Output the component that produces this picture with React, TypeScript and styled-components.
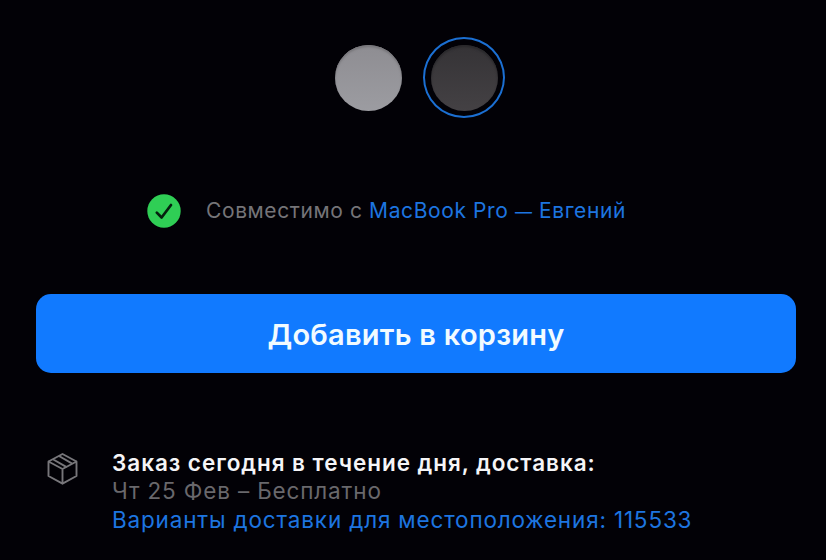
import React from 'react';
import styled, { createGlobalStyle } from 'styled-components';

const GlobalStyle = createGlobalStyle`
  * { box-sizing: border-box; }
  body { margin: 0; background: #020106; }
`;

const Page = styled.main`
  display: flex;
  flex-direction: column;
  width: 826px;
  height: 560px;
  padding: 37px 30px 0 36px;
  overflow: hidden;
  background: #020106;
  color: #f5f5f7;
  font-family: Inter, 'Liberation Sans', sans-serif;
`;

const Swatches = styled.div`
  display: flex;
  justify-content: center;
  gap: 14px;
  height: 81px;
`;

const Swatch = styled.button<{ $selected?: boolean }>`
  display: grid;
  place-items: center;
  width: 82px;
  height: 81px;
  padding: 0;
  border: 2px solid ${(p) => (p.$selected ? '#1b6fd2' : 'transparent')};
  border-radius: 50%;
  background: none;
`;

const Finish = styled.span<{ $from: string; $to: string; $edge: string }>`
  width: 67px;
  height: 66px;
  border-radius: 50%;
  background: linear-gradient(${(p) => p.$from}, ${(p) => p.$to});
  box-shadow: inset 0 2px 2px ${(p) => p.$edge};
`;

const Compatibility = styled.div`
  display: flex;
  align-items: center;
  height: 34px;
  margin: 76px 0 0 111px;
  gap: 25px;
`;

const CompatText = styled.p`
  margin: 0;
  color: #757478;
  font-size: 21px;
  line-height: 28px;
  letter-spacing: 0.6px;
  white-space: nowrap;
`;

const Link = styled.a`
  color: #1d75e0;
`;

const Dash = styled.span`
  font-size: 17px;
`;

const AddButton = styled.button`
  width: 760px;
  height: 79px;
  margin-top: 66px;
  padding: 2px 0 0;
  border: 0;
  border-radius: 15px;
  background: #117aff;
  color: #f2fbff;
  font: 600 29px/36px Inter, 'Liberation Sans', sans-serif;
  letter-spacing: 0.25px;
`;

const Delivery = styled.section`
  display: flex;
  align-items: flex-start;
  margin: 75.5px 0 0 11px;
`;

const BoxIcon = styled.svg`
  flex: none;
  width: 31px;
  height: 34px;
  margin: 3px 34px 0 0;
`;

const DeliveryText = styled.div`
  display: flex;
  flex-direction: column;
`;

const Line = styled.div<{ $color: string; $weight?: number; $spacing: number }>`
  color: ${(p) => p.$color};
  font-size: 22.5px;
  font-weight: ${(p) => p.$weight ?? 400};
  line-height: 28.5px;
  letter-spacing: ${(p) => p.$spacing}px;
  white-space: nowrap;
`;

export default function App() {
  return (
    <>
      <GlobalStyle />
      <Page>
        <Swatches>
          <Swatch aria-label="Серебристый">
            <Finish $from="#8e8d92" $to="#9c9ca1" $edge="#77767a" />
          </Swatch>
          <Swatch $selected aria-label="Серый космос">
            <Finish $from="#353336" $to="#444144" $edge="#29282b" />
          </Swatch>
        </Swatches>
        <Compatibility>
          <svg width="34" height="34" viewBox="0 0 34 34" fill="none">
            <circle cx="17" cy="17" r="16.7" fill="#2fce55" />
            <path d="M9.8 18.6 14.6 23.5 24 11" stroke="#05200f" strokeWidth="2.7" strokeLinecap="round" strokeLinejoin="round" />
          </svg>
          <CompatText>
            Совместимо с <Link>MacBook Pro <Dash>—</Dash> Евгений</Link>
          </CompatText>
        </Compatibility>
        <AddButton>Добавить в корзину</AddButton>
        <Delivery>
          <BoxIcon viewBox="0 0 31 34" fill="none" stroke="#77767a" strokeWidth="1.9" strokeLinejoin="round" strokeLinecap="round">
            <path d="M15.5 2 29.5 9.5V24L15.5 31.7 1.5 24V9.5ZM1.5 9.5 15.5 17 29.5 9.5M15.5 17V31.7M12 4 25.2 11.6M5.9 7.2 19.2 14.9" />
          </BoxIcon>
          <DeliveryText>
            <Line $color="#f5f5f7" $weight={600} $spacing={0.95}>Заказ сегодня в течение дня, доставка:</Line>
            <Line $color="#69686c" $spacing={0.85}>Чт 25 Фев – Бесплатно</Line>
            <Line $color="#1d75e0" $spacing={0.83}>Варианты доставки для местоположения: 115533</Line>
          </DeliveryText>
        </Delivery>
      </Page>
    </>
  );
}
